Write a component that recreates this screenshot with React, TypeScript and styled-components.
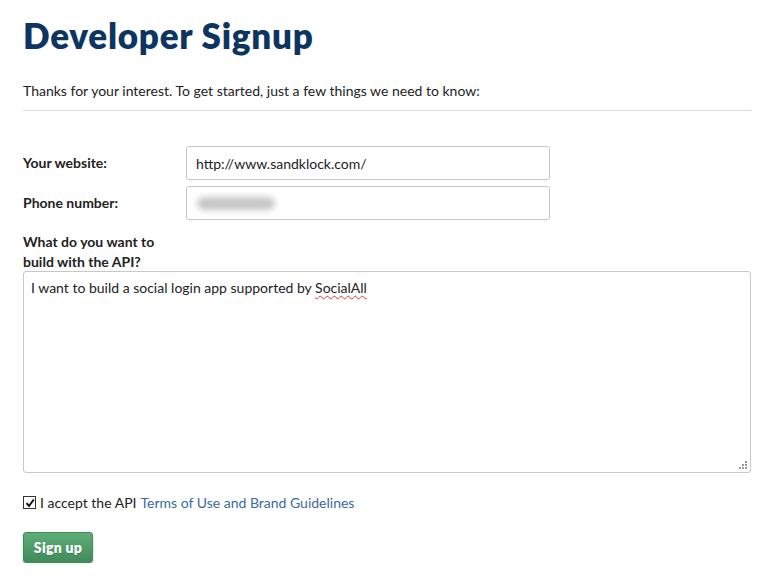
import React from "react";
import styled, { createGlobalStyle } from "styled-components";

const Global = createGlobalStyle`
  html, body { margin: 0; padding: 0; background: #fff; }
  body { font-family: "Lato", "Open Sans", "Liberation Sans", sans-serif; color: #222; }
`;

const Page = styled.div`
  padding: 12px 24px 0 23px;
  width: 728px;
`;

const Title = styled.h1`
  margin: 0;
  font-size: 35px;
  font-weight: 800;
  color: #0d3561;
  letter-spacing: 0.75px;
  line-height: 46px;
`;

const Intro = styled.p`
  margin: 23px 0 0;
  font-size: 14px;
  color: #222;
  padding-bottom: 9px;
  border-bottom: 1px solid #dcdcdc;
  line-height: 20px;
`;

const Form = styled.form`
  margin-top: 35px;
  display: flex;
  flex-direction: column;
`;

const Row = styled.div`
  display: grid;
  grid-template-columns: 163px 364px;
  align-items: center;
  margin-bottom: 6px;
`;

const Label = styled.label`
  font-size: 14px;
  font-weight: 700;
  color: #222;
  line-height: 20px;
`;

const Field = styled.div`
  height: 32px;
  border: 1px solid #c8c8c8;
  border-radius: 3px;
  display: flex;
  align-items: center;
  padding: 0 9px;
  font-size: 14px;
  color: #222;
`;

const Blur = styled.span`
  display: inline-block;
  width: 78px;
  height: 13px;
  border-radius: 7px;
  background: #c6c6c6;
  filter: blur(3px);
  margin-left: 1px;
`;

const AreaLabel = styled(Label)`
  display: block;
  margin-top: 6px;
  margin-bottom: -1px;
`;

const Area = styled.div`
  position: relative;
  border: 1px solid #c8c8c8;
  border-radius: 3px;
  padding: 6px 7px;
  font-size: 14px;
  color: #222;
  line-height: 20px;
  box-sizing: border-box;
  height: 202px;
`;

const Misspelled = styled.span`
  text-decoration: underline wavy #e53935;
  text-decoration-thickness: 1px;
  text-underline-offset: 2px;
`;

const Grip = styled.svg`
  position: absolute;
  right: 3px;
  bottom: 3px;
`;

const CheckRow = styled.div`
  display: flex;
  align-items: center;
  margin-top: 21px;
  font-size: 14px;
  color: #222;
`;

const Box = styled.span`
  width: 11px;
  height: 11px;
  border: 1px solid #333;
  background: #fff;
  display: inline-flex;
  align-items: center;
  justify-content: center;
  margin-right: 4px;
`;

const Link = styled.a`
  color: #3b6aa0;
  text-decoration: none;
  margin-left: 4px;
`;

const Button = styled.button`
  margin-top: 21px;
  align-self: flex-start;
  width: 70px;
  height: 31px;
  border: 1px solid #3f8a59;
  border-radius: 3px;
  background: linear-gradient(#5eae78, #3f8b5a);
  color: #fff;
  font-family: "Lato", "Open Sans", sans-serif;
  font-weight: 800;
  font-size: 14px;
  letter-spacing: 0.3px;
  box-shadow: 0 1px 2px rgba(0,0,0,0.25);
  text-shadow: 0 1px 0 rgba(0,0,0,0.2);
  padding: 0;
  cursor: pointer;
`;

export default function App() {
  return (
    <Page>
      <Global />
      <Title>Developer Signup</Title>
      <Intro>Thanks for your interest. To get started, just a few things we need to know:</Intro>
      <Form onSubmit={(e) => e.preventDefault()}>
        <Row>
          <Label>Your website:</Label>
          <Field>http://www.sandklock.com/</Field>
        </Row>
        <Row>
          <Label>Phone number:</Label>
          <Field><Blur /></Field>
        </Row>
        <AreaLabel>
          What do you want to
          <br />
          build with the API?
        </AreaLabel>
        <Area role="textbox">
          I want to build a social login app supported by <Misspelled>SocialAll</Misspelled>
          <Grip width="9" height="9" viewBox="0 0 9 9">
            <g fill="#999">
              <rect x="7" y="1" width="2" height="2" />
              <rect x="4" y="4" width="2" height="2" />
              <rect x="7" y="4" width="2" height="2" />
              <rect x="1" y="7" width="2" height="2" />
              <rect x="4" y="7" width="2" height="2" />
              <rect x="7" y="7" width="2" height="2" />
            </g>
          </Grip>
        </Area>
        <CheckRow>
          <Box>
            <svg width="10" height="10" viewBox="0 0 10 10">
              <path d="M1.5 5.2 L4 8 L8.8 1.5" stroke="#111" strokeWidth="2" fill="none" />
            </svg>
          </Box>
          I accept the API<Link href="#">Terms of Use and Brand Guidelines</Link>
        </CheckRow>
        <Button type="submit">Sign up</Button>
      </Form>
    </Page>
  );
}
